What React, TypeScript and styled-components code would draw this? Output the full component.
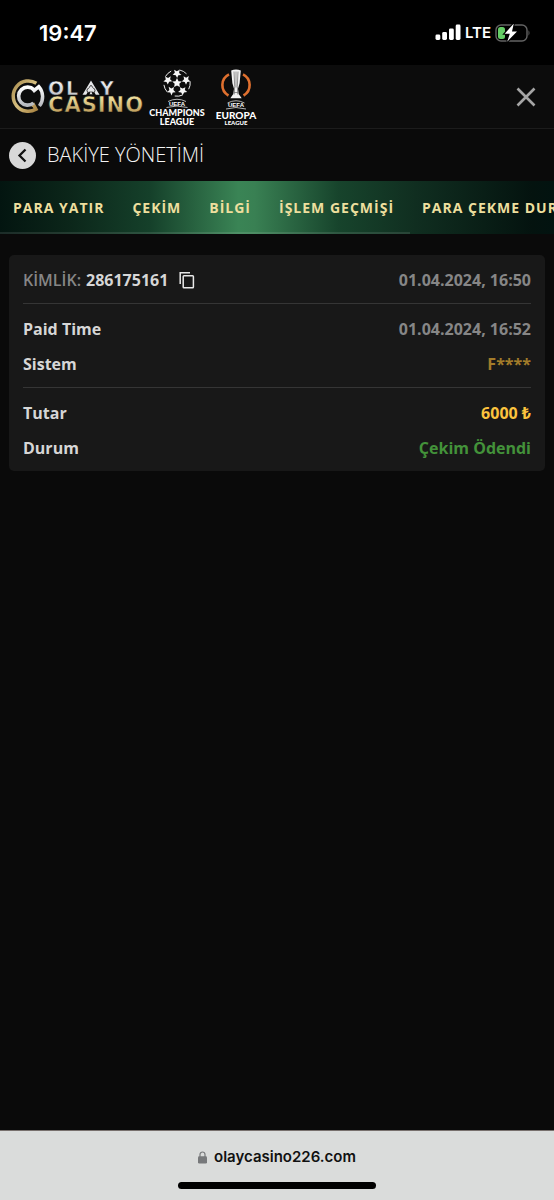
import React from "react";
import styled, { createGlobalStyle } from "styled-components";

const GlobalStyle = createGlobalStyle`
  *, *::before, *::after { box-sizing: border-box; }
  body { margin: 0; background: #0a0a0a; }
  button { border: 0; padding: 0; background: none; cursor: pointer; }
`;

const Screen = styled.div`
  display: flex;
  flex-direction: column;
  min-height: 100vh;
  background: #0a0a0a;
  color: #d6d6d6;
  font-family: "Open Sans", "Noto Sans", sans-serif;
`;

const StatusBar = styled.div`
  display: flex;
  align-items: center;
  justify-content: space-between;
  height: 65px;
  padding: 0 23px 0 39px;
  background: #000;
  color: #fff;
  font-family: Inter, sans-serif;
`;

const Clock = styled.span`
  font-size: 22px;
  font-weight: 600;
`;

const Signals = styled.div`
  display: flex;
  align-items: center;
  gap: 4px;
`;

const Network = styled.span`
  font-size: 15px;
  font-weight: 600;
  line-height: 20px;
`;

const Header = styled.header`
  display: flex;
  align-items: center;
  justify-content: space-between;
  height: 64px;
  padding: 0 16px 0 10px;
  border-bottom: 1px solid #1c1c1c;
  background: #0c0c0c;
`;

const Brands = styled.div`
  display: flex;
  align-items: center;
`;

const BrandLink = styled.a`
  display: block;
  line-height: 0;
`;

const IconButton = styled.button`
  display: grid;
  place-items: center;
  line-height: 0;
`;

const TitleBar = styled.div`
  display: flex;
  align-items: center;
  gap: 11px;
  height: 52px;
  padding: 0 9px;
`;

const BackButton = styled(IconButton)`
  width: 27px;
  height: 27px;
  border-radius: 50%;
  background: #d8d8d8;
`;

const Title = styled.h1`
  margin: 0;
  color: #f4f4f4;
  font-size: 20px;
  font-weight: 300;
  line-height: 26px;
`;

const Tabs = styled.nav`
  position: relative;
  display: flex;
  gap: 28px;
  height: 53px;
  padding: 0 13px;
  overflow: hidden;
  background: linear-gradient(90deg, #031510 0%, #0b2519 12%, #15402a 27%, #3a8455 43%, #398053 46%, #17442c 61%, #102e20 75%, #04130f 96%, #021310 100%);

  &::after {
    content: "";
    position: absolute;
    left: 0;
    bottom: 0;
    width: 74%;
    height: 2px;
    background: rgba(255, 255, 255, 0.1);
  }
`;

const Tab = styled.a`
  flex: none;
  color: #eddf9e;
  font-size: 14px;
  font-weight: 700;
  letter-spacing: 1px;
  line-height: 54px;
  text-decoration: none;
  white-space: nowrap;
`;

const Main = styled.main`
  flex: 1;
  padding: 21px 9px;
`;

const Card = styled.article`
  padding: 0 14px;
  border-radius: 5px;
  background: #181818;
  font-size: 16px;
  font-weight: 700;
  line-height: 20px;
`;

const Group = styled.dl`
  display: flex;
  flex-direction: column;
  gap: 15px;
  margin: 0;
  padding: 15px 0 13px;

  & + & {
    border-top: 1px solid #353535;
  }
`;

const Row = styled.div`
  display: flex;
  align-items: center;
  justify-content: space-between;
`;

const Label = styled.dt`
  display: flex;
  align-items: center;
  gap: 5px;
`;

const Muted = styled.span`
  color: #868686;
  font-weight: 600;
`;

const CopyButton = styled(IconButton)`
  margin-left: 5px;
`;

const tones = {
  muted: "#868686",
  bronze: "#a37c2a",
  gold: "#fcc43e",
  green: "#43923a",
};

const Value = styled.dd<{ $tone: keyof typeof tones }>`
  margin: 0;
  color: ${({ $tone }) => tones[$tone]};
`;

const BrowserBar = styled.footer`
  display: flex;
  flex-direction: column;
  align-items: center;
  gap: 15px;
  padding: 16px 0 11px;
  border-top: 1px solid #77706d;
  background: #dadcdb;
  color: #111;
  font-family: Inter, sans-serif;
`;

const Address = styled.div`
  display: flex;
  align-items: center;
  gap: 7px;
  font-size: 15px;
  font-weight: 600;
  line-height: 20px;
`;

const HomeIndicator = styled.div`
  width: 198px;
  height: 7px;
  border-radius: 4px;
  background: #000;
`;

const SignalIcon = () => (
  <svg width="26" height="17" viewBox="0 0 26 17" fill="#fff" aria-hidden="true">
    <rect x="0.5" y="10.5" width="4.8" height="5.5" rx="1.4" />
    <rect x="7.2" y="8" width="4.8" height="8" rx="1.4" />
    <rect x="14" y="4.5" width="4.8" height="11.5" rx="1.4" />
    <rect x="20.7" y="0.5" width="4.8" height="15.5" rx="1.4" />
  </svg>
);

const BatteryIcon = () => (
  <svg width="36" height="18" viewBox="0 0 36 18" aria-hidden="true">
    <rect x="1" y="1" width="31" height="16" rx="5" fill="none" stroke="#636363" strokeWidth="1.4" />
    <path d="M33.5 6.3q2 2.7 0 5.4z" fill="#636363" />
    <rect x="3" y="3" width="7" height="12" rx="2.5" fill="#65ce66" />
    <path d="M18.8-.5 9.7 9.7h5.1l-2.6 8L22 7.5h-5z" fill="#fff" stroke="#000" strokeWidth="2.2" paintOrder="stroke" />
  </svg>
);

const CasinoLogo = () => (
  <svg width="136" height="38" viewBox="0 0 136 38" role="img" aria-label="Olay Casino">
    <defs>
      <linearGradient id="gold" x1="0" y1="0" x2="1" y2="1">
        <stop offset="0" stopColor="#a98c4e" />
        <stop offset="0.5" stopColor="#d6bf80" />
        <stop offset="1" stopColor="#a98442" />
      </linearGradient>
      <linearGradient id="goldText" x1="0" y1="0" x2="0" y2="1">
        <stop offset="0.2" stopColor="#eddc9b" />
        <stop offset="1" stopColor="#b08a48" />
      </linearGradient>
      <linearGradient id="silver" x1="0" y1="0" x2="0" y2="1">
        <stop offset="0" stopColor="#fff" />
        <stop offset="1" stopColor="#b6b9be" />
      </linearGradient>
    </defs>
    <g fill="none">
      <path d="M26.4 5.2A15.2 15.2 0 1 0 26 31.3L23.4 26.6l-2 .6" stroke="url(#gold)" strokeWidth="3.5" />
      <path d="M24 11.8A9 9 0 1 0 23.5 25" stroke="url(#silver)" strokeWidth="3.6" />
      <path d="m22.8 13.6 6-5a15.2 15.2 0 0 1 .6 19.4" stroke="url(#silver)" strokeWidth="3.5" />
    </g>
    <g fontFamily="DejaVu Sans, sans-serif" fontWeight="700" stroke="#0c0c0c" strokeWidth="0.5">
      <text x="38" y="17" fontSize="19" fill="url(#silver)">O</text>
      <text x="56" y="17" fontSize="19" fill="url(#silver)">L</text>
      <text x="90" y="17" fontSize="19" fill="url(#silver)">Y</text>
      <text x="38" y="34" fontSize="21" fill="url(#goldText)" letterSpacing="1">CASINO</text>
    </g>
    <g fill="#e5e6e8">
      <path d="m81 2.5 8.5 14.2h-3.7L81 8.5l-4.8 8.2h-3.7z" />
      <path d="M81 7.2c1 2.3 4 3.2 4 5.4 0 2-2.2 2.3-3.2 1.1l1.1 3h-3.8l1.1-3c-1 1.2-3.2.9-3.2-1.1 0-2.2 3-3.1 4-5.4z" stroke="#0c0c0c" strokeWidth="0.8" />
    </g>
  </svg>
);

const starPath = "M0-5 1.5-1.8 4.8-1.5 2.3.8 2.9 4 0 2.4-2.9 4-2.3.8-4.8-1.5-1.5-1.8z";

const ChampionsLogo = () => (
  <svg width="62" height="60" viewBox="0 0 62 60" role="img" aria-label="UEFA Champions League">
    <g transform="translate(31 16)" fill="#f5f5f5">
      <path d={starPath} />
      {[0, 72, 144, 216, 288].map((angle) => (
        <g key={angle} transform={`rotate(${angle})`}>
          <path d={starPath} transform="translate(0 -9.6) rotate(36) scale(.95 .9)" />
          <path d="M2.5-13A13.2 13.2 0 0 1 9.5-9.2" fill="none" stroke="#eee" strokeWidth="0.9" />
        </g>
      ))}
    </g>
    <path d="M22 34.5q9-4.5 18 0m-19.5 6q10.500-3 21 0" fill="none" stroke="#ddd" strokeWidth="0.8" />
    <g fill="#fff" textAnchor="middle">
      <text x="31" y="39" fontFamily="Liberation Sans, sans-serif" fontSize="6" fontWeight="700">UEFA</text>
      <g fontFamily="Lato, sans-serif" fontSize="9" fontWeight="900">
        <text x="31" y="49">CHAMPIONS</text>
        <text x="31" y="58">LEAGUE</text>
      </g>
    </g>
  </svg>
);

const EuropaLogo = () => (
  <svg width="56" height="60" viewBox="0 0 56 60" role="img" aria-label="UEFA Europa League">
    <g fill="none" stroke="#df702f" strokeWidth="2.6">
      <path d="M21 7.3A12 12 0 0 0 20.5 28.5" />
      <path d="M35 7.3a12 12 0 0 1 .5 21.2" />
    </g>
    <path d="M23.2 3.4q4.8-2 9.6 0l-1.2 12.8-1.6 5.5.7 5.3 3 4.2H22.3l3-4.2.7-5.3-1.6-5.5z" fill="#f3f3f3" />
    <path d="m26 4.5.7 15-.5 8m3.8-23-.7 15 .5 8M28 4.5v16m-2.6 5h5.2" fill="none" stroke="#777" strokeWidth="0.8" />
    <path d="M19.500 36q8.500-4.500 17 0m-18.500 6q10-3 20 0" fill="none" stroke="#ddd" strokeWidth="0.8" />
    <g fill="#fff" textAnchor="middle">
      <text x="28" y="40" fontFamily="Liberation Sans, sans-serif" fontSize="6" fontWeight="700">UEFA</text>
      <g fontFamily="Lato, sans-serif" fontWeight="900">
        <text x="28" y="52" fontSize="10">EUROPA</text>
        <text x="28" y="58" fontSize="6">LEAGUE</text>
      </g>
    </g>
  </svg>
);

const tabs = ["PARA YATIR", "ÇEKİM", "BİLGİ", "İŞLEM GEÇMİŞİ", "PARA ÇEKME DURUMU"];

export default function App() {
  return (
    <Screen>
      <GlobalStyle />
      <StatusBar>
        <Clock>19:47</Clock>
        <Signals>
          <SignalIcon />
          <Network>LTE</Network>
          <BatteryIcon />
        </Signals>
      </StatusBar>
      <Header>
        <Brands>
          <BrandLink href="#home"><CasinoLogo /></BrandLink>
          <BrandLink href="#champions"><ChampionsLogo /></BrandLink>
          <BrandLink href="#europa"><EuropaLogo /></BrandLink>
        </Brands>
        <IconButton type="button" aria-label="Kapat">
          <svg width="24" height="24" viewBox="0 0 24 24" stroke="#a5a5a5" strokeWidth="2.6">
            <path d="m3.500 3.500 17 17m0-17-17 17" />
          </svg>
        </IconButton>
      </Header>
      <TitleBar>
        <BackButton type="button" aria-label="Geri">
          <svg width="27" height="27" viewBox="0 0 27 27" fill="none" stroke="#111" strokeWidth="2.3">
            <path d="M16.500 7.500 10.500 13.500l6 6" />
          </svg>
        </BackButton>
        <Title>BAKİYE YÖNETİMİ</Title>
      </TitleBar>
      <Tabs>
        {tabs.map((tab) => (
          <Tab key={tab} href="#tab">{tab}</Tab>
        ))}
      </Tabs>
      <Main>
        <Card>
          <Group>
            <Row>
              <Label>
                <Muted>KİMLİK:</Muted>
                <span>286175161</span>
                <CopyButton type="button" aria-label="Kopyala">
                  <svg width="18" height="18" viewBox="0 0 18 18" fill="none" stroke="#e8e8e8" strokeWidth="1.5">
                    <path d="M2.200 13V1.800H12" />
                    <rect x="5.2" y="4.7" width="10.2" height="12" rx="0.8" />
                  </svg>
                </CopyButton>
              </Label>
              <Value $tone="muted">01.04.2024, 16:50</Value>
            </Row>
          </Group>
          <Group>
            <Row>
              <Label>Paid Time</Label>
              <Value $tone="muted">01.04.2024, 16:52</Value>
            </Row>
            <Row>
              <Label>Sistem</Label>
              <Value $tone="bronze">F****</Value>
            </Row>
          </Group>
          <Group>
            <Row>
              <Label>Tutar</Label>
              <Value $tone="gold">6000 ₺</Value>
            </Row>
            <Row>
              <Label>Durum</Label>
              <Value $tone="green">Çekim Ödendi</Value>
            </Row>
          </Group>
        </Card>
      </Main>
      <BrowserBar>
        <Address>
          <svg width="9" height="13" viewBox="0 0 9 13" aria-hidden="true">
            <path d="M2 6V3.500a2.500 2.500 0 0 1 5 0V6" fill="none" stroke="#77797b" strokeWidth="1.2" />
            <rect y="5.3" width="9" height="7.2" rx="1.3" fill="#77797b" />
          </svg>
          <span>olaycasino226.com</span>
        </Address>
        <HomeIndicator />
      </BrowserBar>
    </Screen>
  );
}
